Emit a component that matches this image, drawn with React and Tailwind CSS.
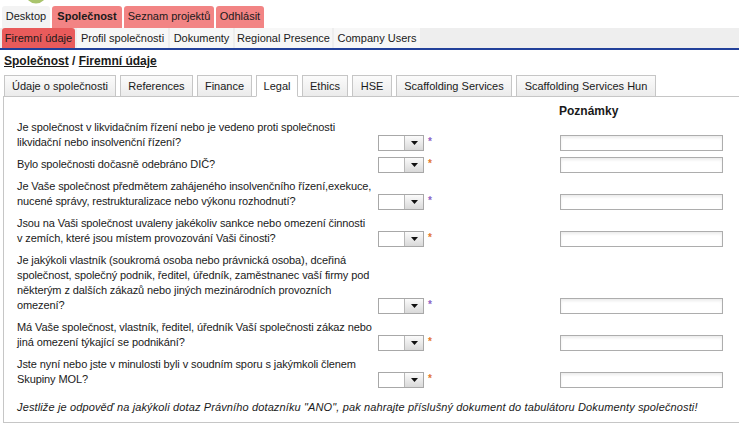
import React from "react";

const purple = "text-[#8a63c4]";
const orange = "text-[#e2762e]";

const questions = [
  {
    lines: [
      "Je společnost v likvidačním řízení nebo je vedeno proti společnosti",
      "likvidační nebo insolvenční řízení?",
    ],
    star: purple,
  },
  { lines: ["Bylo společnosti dočasně odebráno DIČ?"], star: orange },
  {
    lines: [
      "Je Vaše společnost předmětem zahájeného insolvenčního řízení,exekuce,",
      "nucené správy, restrukturalizace nebo výkonu rozhodnutí?",
    ],
    star: purple,
  },
  {
    lines: [
      "Jsou na Vaši společnost uvaleny jakékoliv sankce nebo omezení činnosti",
      "v zemích, které jsou místem provozování Vaši činosti?",
    ],
    star: orange,
  },
  {
    lines: [
      "Je jakýkoli vlastník (soukromá osoba nebo právnická osoba), dceřiná",
      "společnost, společný podnik, ředitel, úředník, zaměstnanec vaší firmy pod",
      "některým z dalších zákazů nebo jiných mezinárodních provozních",
      "omezení?",
    ],
    star: purple,
  },
  {
    lines: [
      "Má Vaše společnost, vlastník, ředitel, úředník Vaší společnosti zákaz nebo",
      "jiná omezení týkající se podnikání?",
    ],
    star: orange,
  },
  {
    lines: [
      "Jste nyní nebo jste v minulosti byli v soudním sporu s jakýmkoli členem",
      "Skupiny MOL?",
    ],
    star: orange,
  },
];

const tabs = [
  { label: "Údaje o společnosti", w: "w-[112px]" },
  { label: "References", w: "w-[73px]" },
  { label: "Finance", w: "w-[55px]" },
  { label: "Legal", w: "w-[42px]", active: true },
  { label: "Ethics", w: "w-[46px]" },
  { label: "HSE", w: "w-[40px]" },
  { label: "Scaffolding Services", w: "w-[116px]" },
  { label: "Scaffolding Services Hun", w: "w-[140px]" },
];

const subnav = [
  { label: "Profil společnosti", w: "w-[91px]" },
  { label: "Dokumenty", w: "w-[63px]" },
  { label: "Regional Presence", w: "w-[97px]" },
  { label: "Company Users", w: "w-[86px]" },
];

const SelectBox = () => (
  <div className="flex h-[16px] w-[46px] border border-[#a8a8a8] bg-white">
    <div className="flex-1" />
    <div className="flex w-[19px] items-center justify-center border-l border-[#b8b8b8] bg-linear-to-b from-[#fbfbfb] to-[#d9d9d9]">
      <svg width="7" height="4" viewBox="0 0 7 4">
        <path d="M0 0h7L3.5 4z" fill="#111" />
      </svg>
    </div>
  </div>
);

const QuestionRow = ({ q }) => (
  <div className="flex">
    <div className="w-[374px] shrink-0 whitespace-nowrap pb-[1px] pl-[13px] leading-[15px] tracking-[-0.1px]">
      {q.lines.map((l, i) => (
        <div key={i}>{l}</div>
      ))}
    </div>
    <div className="flex w-[182px] shrink-0 self-end">
      <SelectBox />
      <span className={`ml-[4px] mt-[2px] text-[10px] font-bold leading-[10px] ${q.star}`}>*</span>
    </div>
    <div className="h-[16px] w-[163px] self-end border border-[#adadad] bg-white shadow-[inset_0_2px_3px_rgba(0,0,0,0.08)]" />
  </div>
);

const App = () => {
  return (
    <div className="h-[427px] w-[739px] overflow-hidden bg-white font-['Liberation_Sans',Arial,sans-serif] text-[11px] text-[#1a1a1a]">
      {/* logo stub */}
      <div className="h-[6px] pl-[26px]">
        <svg width="20" height="5" viewBox="0 0 20 5" className="block">
          <circle cx="10" cy="-7" r="10.5" fill="#a9c46c" />
        </svg>
      </div>

      {/* main nav */}
      <div className="flex h-[22px] gap-[2px] pl-[2px] leading-[20px]">
        <div className="w-[48px] rounded-t-[3px] bg-[#f3f3f3] text-center">Desktop</div>
        <div className="w-[70px] rounded-t-[3px] bg-[#f28484] text-center font-bold">Společnost</div>
        <div className="w-[90px] rounded-t-[3px] bg-[#f28484] text-center">Seznam projektů</div>
        <div className="w-[48px] rounded-t-[3px] bg-[#f28484] text-center">Odhlásit</div>
      </div>

      {/* sub nav */}
      <div className="flex h-[22px] gap-[2px] border-b-2 border-[#22409a] bg-[#eeeeee] pl-[2px] leading-[20px]">
        <div className="w-[73px] rounded-t-[3px] bg-[#e95b5b] text-center">Firemní údaje</div>
        {subnav.map((s) => (
          <div key={s.label} className={`${s.w} bg-[#f7f7f7] text-center`}>
            {s.label}
          </div>
        ))}
      </div>

      {/* breadcrumb */}
      <div className="mt-[4px] pl-[4px] text-[12px] font-bold leading-[14px]">
        <span className="underline">Společnost</span> / <span className="underline">Firemní údaje</span>
      </div>

      {/* tabs */}
      <div className="relative z-10 -mb-px mt-[7px] flex gap-[4px] pl-[4px]">
        {tabs.map((t) => (
          <div
            key={t.label}
            className={`${t.w} flex h-[22px] items-center justify-center border border-[#c6c6c6] ${
              t.active ? "border-b-white bg-white" : "bg-linear-to-b from-[#fbfbfb] to-[#ebebeb]"
            }`}
          >
            {t.label}
          </div>
        ))}
      </div>

      {/* panel */}
      <div className="ml-[3px] border-y border-l border-[#c6c6c6] pb-[7px] pt-[7px]">
        <div className="flex leading-[14px]">
          <div className="w-[555px]" />
          <div className="text-[12px] font-bold">Poznámky</div>
        </div>
        <div className="mt-[2px] flex flex-col gap-[6px]">
          {questions.map((q, i) => (
            <QuestionRow key={i} q={q} />
          ))}
        </div>
        <div className="mt-[12px] whitespace-nowrap pl-[13px] italic leading-[15px] tracking-[0.13px]">
          Jestliže je odpověď na jakýkoli dotaz Právního dotazníku "ANO", pak nahrajte příslušný dokument do tabulátoru Dokumenty společnosti!
        </div>
      </div>
    </div>
  );
};

export default App;
